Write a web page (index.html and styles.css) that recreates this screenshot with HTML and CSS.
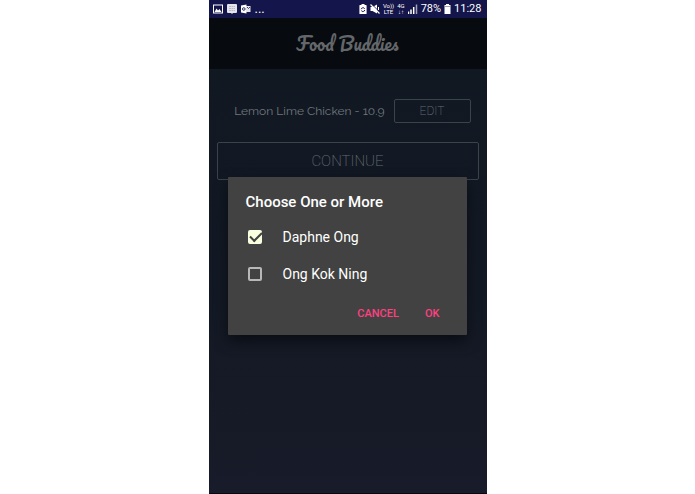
FILE: index.html
```html
<!DOCTYPE html>
<html lang="en">
  <head>
    <meta charset="utf-8" />
    <title>Food Buddies</title>
    <meta name="viewport" content="width=device-width, initial-scale=1" />
    <link rel="stylesheet" href="styles.css">
  </head>
  <body>
    <div class="phone">
      <div class="status-bar">
        <div class="status-group">
          <svg width="10" height="10" viewBox="0 0 10 10">
            <rect x="0.5" y="1" width="9" height="8" fill="none" stroke="#fff" />
            <path d="M1.5 8 L3.5 4.5 L5 6.5 L6.5 5 L8.5 8 Z" fill="#fff" />
          </svg>
          <svg width="10" height="10" viewBox="0 0 10 10">
            <path d="M1 0h8a1 1 0 0 1 1 1v7a1 1 0 0 1-1 1H6L5 10L4 9H1a1 1 0 0 1-1-1V1a1 1 0 0 1 1-1z" fill="#e4e4ea" />
            <path d="M2 2.5h6M2 4.5h6M2 6.5h6" stroke="#b9bac6" stroke-width="1" stroke-dasharray="2 0.5" />
          </svg>
          <svg width="10" height="10" viewBox="0 0 10 10">
            <path d="M0 1.5L5.5 0.5v9L0 8.5z" fill="#fff" />
            <path d="M5 2h4.5v6H5z" fill="#e4e4ea" />
            <path d="M6 3l1.5 1.5L9 3" fill="none" stroke="#17174a" stroke-width="0.8" />
            <circle cx="2.8" cy="5" r="1.3" fill="none" stroke="#17174a" stroke-width="0.9" />
          </svg>
          <span class="more">...</span>
        </div>
        <div class="status-group status-right">
          <svg width="8" height="10" viewBox="0 0 8 10">
            <path d="M1 1h1.5V0h3v1H7a.6.6 0 0 1 .6.6V9.4a.6.6 0 0 1-.6.6H1a.6.6 0 0 1-.6-.6V1.600a.6.6 0 0 1 .6-.6z" fill="#fff" />
            <path d="M2.2 5.2a1.9 1.9 0 0 1 3.5-.5M5.800 6a1.9 1.9 0 0 1-3.5.6" fill="none" stroke="#17174a" stroke-width="1" />
          </svg>
          <svg class="mute" width="10" height="10" viewBox="0 0 10 10">
            <path d="M0.5 3h2L7 0.5v9L2.5 7h-2z" fill="#fff" />
            <path d="M8.5 3v3" stroke="#fff" />
            <path d="M1.5 0L10 8.5" stroke="#17174a" stroke-width="1" />
            <path d="M0.5 0.5L9.500 9.500" stroke="#fff" stroke-width="1.3" />
          </svg>
          <span class="tiny">Vo))<br />LTE</span>
          <span class="tiny network">4G<br />↓↑</span>
          <svg class="signal" width="10" height="10" viewBox="0 0 10 10">
            <path d="M0.5 7.5v2.5M3 5.5v4.5" stroke="#fff" stroke-width="1.5" />
            <path d="M5.7 3v7" stroke="#fff" stroke-width="1.5" />
            <path d="M8.5 0.5v9.5" stroke="#a3a4ba" stroke-width="1.5" />
          </svg>
          <span>78%</span>
          <svg width="7" height="10" viewBox="0 0 7 10">
            <path d="M2 0h3v1h1.5v9h-6V1H2z" fill="#fff" />
            <path d="M1 2.5h5" stroke="#a0a2b5" />
          </svg>
          <span class="clock">11:28</span>
        </div>
      </div>

      <header class="app-bar">
        <h1 class="logo">Food Buddies</h1>
      </header>

      <main class="content">
        <div class="order">
          <span class="order-name">Lemon Lime Chicken - 10.9</span>
          <button class="btn btn-edit" type="button">EDIT</button>
        </div>
        <button class="btn btn-continue" type="button">CONTINUE</button>
      </main>

      <form class="dialog" role="dialog" aria-labelledby="dialog-title">
        <h2 class="dialog-title" id="dialog-title">Choose One or More</h2>
        <label class="option" for="daphne">
          <input class="check" type="checkbox" id="daphne" checked />
          Daphne Ong
        </label>
        <label class="option" for="kokning">
          <input class="check" type="checkbox" id="kokning" />
          Ong Kok Ning
        </label>
        <div class="actions">
          <button class="action" type="button">CANCEL</button>
          <button class="action" type="button">OK</button>
        </div>
      </form>
    </div>
  </body>
</html>
```

FILE: styles.css
```css
* {
  box-sizing: border-box;
}
body {
  margin: 0;
  background: #fff;
  font-family: Roboto, sans-serif;
}
.phone {
  position: relative;
  width: 40vw;
  min-width: 278px;
  min-height: 100vh;
  margin: 0 auto;
  background: linear-gradient(to bottom, #101822, #131924 60%, #181b29);
  border-bottom: 1px solid #08090f;
}

/* status bar */
.status-bar {
  display: flex;
  justify-content: space-between;
  align-items: center;
  height: 18px;
  padding: 0 5px 0 4px;
  background: #14154a;
  color: #fff;
  font-size: 11px;
  line-height: 18px;
}
.status-group {
  display: flex;
  align-items: center;
  gap: 4px;
}
.status-right {
  gap: 3px;
}
.more {
  font-size: 13px;
}
.tiny {
  font-size: 6px;
  line-height: 6px;
  text-align: center;
}

/* app bar */
.app-bar {
  display: flex;
  align-items: center;
  justify-content: center;
  height: 51px;
  background: #070b10;
}
.logo {
  margin: 0;
  color: #64676a;
  font-family: Pacifico, "Liberation Serif", cursive;
  font-size: 18px;
  font-weight: 400;
  line-height: 24px;
}

/* page */
.content {
  padding: 30px 8px;
}
.order {
  display: flex;
  align-items: center;
  justify-content: flex-end;
  gap: 9px;
  margin-bottom: 19px;
  padding-right: 8px;
}
.order-name {
  color: #72777d;
  font-family: Raleway, Lato, sans-serif;
  font-size: 12px;
}
.btn {
  padding: 0;
  border: 1px solid #3c4249;
  border-radius: 2px;
  background: transparent;
  color: #666b72;
  font-family: Roboto, sans-serif;
  font-weight: 200;
}
.btn-edit {
  width: 77px;
  height: 24px;
  font-size: 12px;
}
.btn-continue {
  display: block;
  width: 100%;
  height: 38px;
  font-size: 15px;
}

/* dialog */
.dialog {
  position: absolute;
  top: 177px;
  left: 19px;
  right: 20px;
  padding: 13px 19px 8px 18px;
  background: #424242;
  border-radius: 1px;
  box-shadow: 0 6px 14px rgba(0, 0, 0, 0.5);
  color: #fff;
}
.dialog-title {
  margin: 0 0 4px;
  font-size: 15px;
  font-weight: 500;
  line-height: 24px;
}
.option {
  display: flex;
  align-items: center;
  gap: 21px;
  height: 37px;
  padding-left: 2px;
  font-size: 14px;
}
.check {
  appearance: none;
  display: grid;
  place-items: center;
  width: 14px;
  height: 14px;
  margin: 0;
  border: 2px solid #b8b8b8;
  border-radius: 2px;
}
.check:checked {
  border-color: #f7ffe0;
  background: #f7ffe0;
}
.check:checked::before {
  content: "";
  width: 10px;
  height: 5px;
  margin-bottom: 3px;
  border: solid #424242;
  border-width: 0 0 2px 2px;
  transform: rotate(-45deg);
}
.actions {
  display: flex;
  justify-content: flex-end;
  gap: 10px;
  padding-top: 8px;
}
.action {
  height: 27px;
  padding: 0 8px;
  border: 0;
  background: transparent;
  color: #ff4081;
  font-family: inherit;
  font-size: 11px;
  font-weight: 500;
}
```
